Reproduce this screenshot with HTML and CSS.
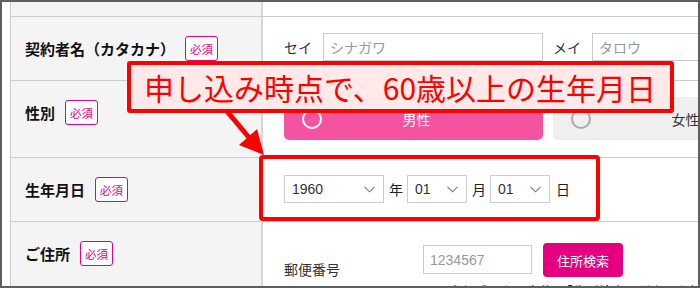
FILE: index.html
```html
<!DOCTYPE html>
<html lang="ja">
<head>
<meta charset="utf-8">
<title>生年月日</title>
<link rel="stylesheet" href="styles.css">
</head>
<body>
<div class="frame">
  <div class="sheet">
    <div class="row row0"><div class="label"></div><div class="field"></div></div>

    <div class="row r1">
      <div class="label"><div class="lab"><span class="lt">契約者名（カタカナ）</span><span class="req">必須</span></div></div>
      <div class="field f1">
        <span class="fl sei">セイ</span><span class="inp wname">シナガワ</span>
        <span class="fl mei">メイ</span><span class="inp wname">タロウ</span>
      </div>
    </div>

    <div class="row r2">
      <div class="label"><div class="lab"><span class="lt">性別</span><span class="req">必須</span></div></div>
      <div class="field f2">
        <div class="rb on"><span class="ring"></span><span class="rb-text">男性</span></div>
        <div class="rb off"><span class="ring"></span><span class="rb-text">女性</span></div>
      </div>
    </div>

    <div class="row r3">
      <div class="label"><div class="lab"><span class="lt">生年月日</span><span class="req">必須</span></div></div>
      <div class="field f3">
        <div class="sel y"><span>1960</span><svg class="chev" width="11" height="7" viewBox="0 0 11 7"><polyline points="0.5,0.8 5.5,5.8 10.5,0.8" fill="none" stroke="#777" stroke-width="1.1"/></svg></div>
        <span class="unit">年</span>
        <div class="sel m"><span>01</span><svg class="chev" width="11" height="7" viewBox="0 0 11 7"><polyline points="0.5,0.8 5.5,5.8 10.5,0.8" fill="none" stroke="#777" stroke-width="1.1"/></svg></div>
        <span class="unit">月</span>
        <div class="sel m"><span>01</span><svg class="chev" width="11" height="7" viewBox="0 0 11 7"><polyline points="0.5,0.8 5.5,5.8 10.5,0.8" fill="none" stroke="#777" stroke-width="1.1"/></svg></div>
        <span class="unit last">日</span>
      </div>
    </div>

    <div class="row r4">
      <div class="label"><div class="lab"><span class="lt">ご住所</span><span class="req">必須</span></div></div>
      <div class="field f4">
        <div class="ziprow">
          <span class="ziplabel">郵便番号</span>
          <span class="inp zipin">1234567</span>
          <span class="btn">住所検索</span>
        </div>
        <div class="note">※郵便番号を入力後、「住所検索」ボタンを押してください</div>
      </div>
    </div>
  </div>

  <svg class="arrow" width="50" height="52" viewBox="0 0 50 52">
    <line x1="3" y1="1" x2="27" y2="29.5" stroke="#ff0000" stroke-width="5"/>
    <polygon points="42,47 17,37 35,21" fill="#ff0000"/>
  </svg>
  <div class="callout">申し込み時点で、60歳以上の生年月日</div>
  <div class="hl"></div>
</div>
</body>
</html>
```

FILE: styles.css
```css
html, body {
  margin: 0;
  padding: 0;
  background: #fff;
}

body {
  font-family: "Noto Sans CJK JP", sans-serif;
  color: #222;
}

.frame {
  position: relative;
  width: 700px;
  height: 288px;
  box-sizing: border-box;
  border: 2px solid #5f5f5f;
  overflow: hidden;
  background: #fff;
}

.sheet {
  margin-left: 8px;
  border-left: 1px solid #cccccc;
}

.row {
  display: grid;
  grid-template-columns: 252px 1fr;
  border-bottom: 1px solid #cccccc;
}

.row0 { height: 14px; }
.r1 { height: 63px; }
.r2 { height: 76px; }
.r3 { height: 63px; }
.r4 { height: 90px; border-bottom: none; }

.label {
  background: #f4f4f4;
  border-right: 2px solid #d6d6d6;
  padding: 19px 0 0 14px;
}

.row0 .label { padding: 0; }

.lab {
  display: flex;
  align-items: center;
  height: 25px;
}

.lt {
  font-size: 15px;
  font-weight: 700;
  line-height: 20px;
  color: #111;
  white-space: nowrap;
}

.req {
  width: 33px;
  height: 25px;
  box-sizing: border-box;
  border: 1px solid #e4007f;
  border-radius: 3px;
  background: #fff;
  color: #e4007f;
  font-size: 11.5px;
  display: flex;
  align-items: center;
  justify-content: center;
  margin-left: 10px;
}

.field {
  padding-left: 21px;
  white-space: nowrap;
  align-self: start;
}

/* row 1 */
.f1 {
  display: flex;
  align-items: center;
  padding-top: 16px;
  height: 28px;
}

.fl {
  font-size: 14px;
  color: #333;
  line-height: 28px;
}

.sei { margin-right: 11px; }
.mei { margin-left: 10px; margin-right: 11px; }

.inp {
  box-sizing: border-box;
  height: 28px;
  border: 1px solid #cccccc;
  padding: 0 6px;
  background: #fff;
  color: #999;
  font-family: "Liberation Sans", "Noto Sans CJK JP", sans-serif;
  font-size: 14px;
  display: flex;
  align-items: center;
  flex: none;
}

.wname { width: 220px; }

/* row 2 */
.f2 {
  display: flex;
  gap: 10px;
  padding-top: 16px;
}

.rb {
  box-sizing: border-box;
  width: 259px;
  height: 43px;
  border-radius: 5px;
  display: flex;
  align-items: center;
  flex: none;
}

.rb.on {
  background: #f4549f;
  color: #fff;
}

.rb.off {
  background: #efefef;
  color: #333;
}

.ring {
  width: 20px;
  height: 20px;
  box-sizing: border-box;
  border-radius: 50%;
  border: 2.5px solid #fff;
  margin-left: 18px;
  flex: none;
}

.off .ring {
  border: 2px solid #aaaaaa;
}

.rb-text {
  flex: 1;
  text-align: center;
  font-size: 14px;
  margin-right: 32px;
}

/* row 3 */
.f3 {
  display: flex;
  align-items: center;
  padding-top: 17px;
  height: 28px;
}

.sel {
  box-sizing: border-box;
  height: 28px;
  border: 1px solid #cccccc;
  background: #fff;
  display: flex;
  align-items: center;
  justify-content: space-between;
  padding: 0 8px 0 7px;
  font-family: "Liberation Sans", sans-serif;
  font-size: 14px;
  color: #333;
  flex: none;
}

.sel.y { width: 100px; }
.sel.m { width: 60px; }

.chev { display: block; }

.unit {
  font-size: 14px;
  color: #222;
  margin: 0 4px 0 5px;
}

.unit.last { margin-left: 6px; }

/* row 4 */
.f4 {
  padding-top: 21px;
}

.ziprow {
  display: flex;
  align-items: flex-start;
}

.ziplabel {
  width: 139px;
  flex: none;
  font-size: 14px;
  line-height: 20px;
  margin-top: 16px;
  color: #333;
}

.zipin {
  width: 109px;
  height: 29px;
  margin-top: 2px;
}

.btn {
  margin-left: 11px;
  width: 80px;
  height: 34px;
  border-radius: 4px;
  background: #e4007f;
  color: #fff;
  font-size: 13px;
  display: flex;
  align-items: center;
  justify-content: center;
  flex: none;
}

.note {
  margin: 3px 0 0 152px;
  font-size: 13px;
  line-height: 18px;
  color: #1a1aff;
}

/* annotations */
.callout {
  position: absolute;
  left: 125px;
  top: 59px;
  width: 547px;
  height: 52px;
  box-sizing: border-box;
  border: 4px solid #ff0000;
  border-radius: 3px;
  background: #ffe9e9;
  color: #ff0000;
  font-size: 30px;
  display: flex;
  align-items: center;
  padding-left: 13px;
  white-space: nowrap;
}

.arrow {
  position: absolute;
  left: 220px;
  top: 106px;
}

.hl {
  position: absolute;
  left: 257px;
  top: 153px;
  width: 341px;
  height: 66px;
  box-sizing: border-box;
  border: 4px solid #ff0000;
  border-radius: 4px;
}
```
